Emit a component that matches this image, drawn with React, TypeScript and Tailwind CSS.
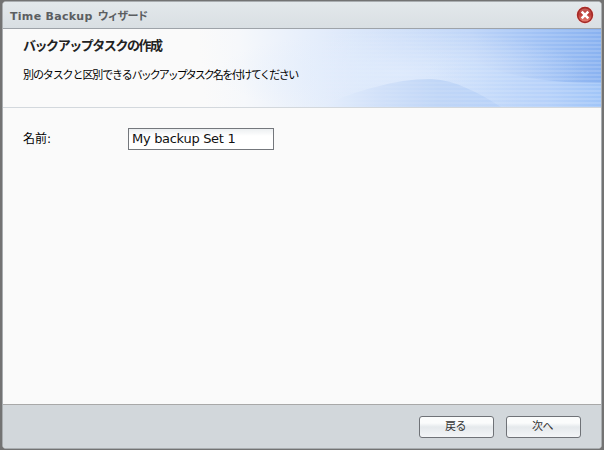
import { useState } from 'react'
import type { ReactNode } from 'react'

const HeaderArt = () => (
  <svg className="block h-[78px] w-[404px]" viewBox="0 0 404 78" aria-hidden="true">
    <defs>
      <linearGradient id="sky" x1="0" y1="0" x2="400" y2="-40" gradientUnits="userSpaceOnUse">
        <stop offset="0" stopColor="#fafafa" />
        <stop offset="0.1" stopColor="#f6f8fb" />
        <stop offset="0.3" stopColor="#e4edfb" />
        <stop offset="0.5" stopColor="#d0e0f9" />
        <stop offset="0.68" stopColor="#bdd4f8" />
        <stop offset="0.85" stopColor="#9fc1f5" />
        <stop offset="1" stopColor="#88b1f0" />
      </linearGradient>
      <radialGradient id="glow">
        <stop offset="0" stopColor="#e2edfd" stopOpacity="0.75" />
        <stop offset="0.5" stopColor="#e2edfd" stopOpacity="0.35" />
        <stop offset="1" stopColor="#e2edfd" stopOpacity="0" />
      </radialGradient>
      <linearGradient id="swoosh" x1="0" y1="0" x2="1" y2="0">
        <stop offset="0" stopColor="#d5e5fc" stopOpacity="0" />
        <stop offset="0.35" stopColor="#c8ddfb" stopOpacity="0.7" />
        <stop offset="0.7" stopColor="#b6d1fa" />
        <stop offset="1" stopColor="#a0c5f8" />
      </linearGradient>
      <linearGradient id="hill" x1="0" y1="0" x2="1" y2="0">
        <stop offset="0" stopColor="#e6effc" />
        <stop offset="0.35" stopColor="#d0e0f9" />
        <stop offset="0.65" stopColor="#c0d6f7" />
        <stop offset="1" stopColor="#b8d2f9" />
      </linearGradient>
      <linearGradient id="fade" x1="0" y1="0" x2="1" y2="0">
        <stop offset="0.1" stopColor="#fff" stopOpacity="0" />
        <stop offset="1" stopColor="#fff" stopOpacity="0.15" />
      </linearGradient>
      <pattern id="lines" width="4" height="4" patternUnits="userSpaceOnUse">
        <rect width="4" height="2" y="1" fill="#fff" />
      </pattern>
      <mask id="lineFade">
        <rect width="404" height="78" fill="url(#fade)" />
      </mask>
    </defs>
    <rect width="404" height="78" fill="url(#sky)" />
    <ellipse cx="205" cy="44" rx="185" ry="44" fill="url(#glow)" />
    <path d="M225 20 C265 24 280 35 303 42 C335 52 370 54 404 54 V78 H225Z" fill="url(#swoosh)" />
    <path d="M122 78 C160 61 203 49 235 50 C258 51 282 64 304 78Z" fill="url(#hill)" />
    <rect width="404" height="78" fill="url(#lines)" mask="url(#lineFade)" />
  </svg>
)

const CloseIcon = () => (
  <svg className="block size-[18px]" viewBox="0 0 18 18" aria-hidden="true">
    <defs>
      <linearGradient id="red" x1="0" y1="0" x2="0" y2="1">
        <stop offset="0" stopColor="#c96a66" />
        <stop offset="0.45" stopColor="#bb3a34" />
        <stop offset="1" stopColor="#ee8a7c" />
      </linearGradient>
    </defs>
    <circle cx="9" cy="9" r="8.8" fill="#f5dcda" />
    <circle cx="9" cy="9" r="7.4" fill="url(#red)" stroke="#a52a27" strokeWidth="1.6" />
    <path d="M5.7 5.7 L12.3 12.3 M12.3 5.7 L5.7 12.3" stroke="#fff" strokeWidth="2.6" />
  </svg>
)

const WizardButton = ({ children }: { children: ReactNode }) => (
  <button className="flex h-[22px] w-[75px] items-center justify-center rounded-[3px] border border-[#6f7277] bg-linear-to-b from-[#fbfcfc] from-30% via-[#e5e9ec] via-50% to-[#f3f5f7] pr-0.5 text-[11px] leading-none tracking-[-0.5px] text-[#333]">
    {children}
  </button>
)

const App = () => {
  const [name, setName] = useState('My backup Set 1')

  return (
    <div className="h-[450px] w-[604px] overflow-hidden bg-[#737373] pt-px pl-0.5 font-['DejaVu_Sans','Noto_Sans_CJK_JP',sans-serif] whitespace-nowrap">
      <div className="flex h-[448px] w-[600px] flex-col overflow-hidden rounded-[4px] border border-[#a9adb0] bg-[#fafafa]">
        <div className="flex h-[27px] shrink-0 items-center justify-between border-b border-[#9ea3a9] bg-linear-to-b from-[#e3e8eb] to-[#d9dfe3] pr-[7px] pl-[7px]">
          <h1 className="flex items-center gap-[5px] pt-[3px] text-[11px] leading-none font-bold text-[#5b5e61]">
            <span className="tracking-[0.3px]">Time Backup</span>
            <span className="tracking-[-1.1px]">ウィザード</span>
          </h1>
          <button aria-label="閉じる">
            <CloseIcon />
          </button>
        </div>

        <div className="flex h-[79px] shrink-0 justify-between border-b border-[#d3d8dd]">
          {/* zero width so the text can run over the artwork */}
          <div className="relative z-10 w-0 pt-[9px] pl-5">
            <h2 className="text-[13px] leading-4 font-bold tracking-[-1.45px] text-[#222]">バックアップタスクの作成</h2>
            <p className="mt-[14px] text-[11px] leading-4 text-black">
              <span className="tracking-[-1.1px]">別のタスクと区別できる</span>
              <span className="tracking-[-2px]">バックアップタスク</span>
              <span className="tracking-[-1.5px]">名を付けてください</span>
            </p>
          </div>
          <HeaderArt />
        </div>

        <div className="flex grow items-start pt-5 pl-5">
          <label htmlFor="task-name" className="w-[105px] pt-[3px] text-[12px] leading-4 text-black">
            名前:
          </label>
          <input
            id="task-name"
            value={name}
            onChange={(e) => setName(e.target.value)}
            className="h-[22px] w-[146px] border border-[#74777c] bg-white bg-linear-to-b from-[#eceff1] to-white to-35% px-[3px] pb-0.5 text-[13px] tracking-[-0.3px] text-[#111] outline-none"
          />
        </div>

        <div className="flex h-11 shrink-0 items-center justify-end gap-3 border-t border-[#a8a8a8] bg-[#d2d7db] pr-5">
          <WizardButton>戻る</WizardButton>
          <WizardButton>次へ</WizardButton>
        </div>
      </div>
    </div>
  )
}

export default App
